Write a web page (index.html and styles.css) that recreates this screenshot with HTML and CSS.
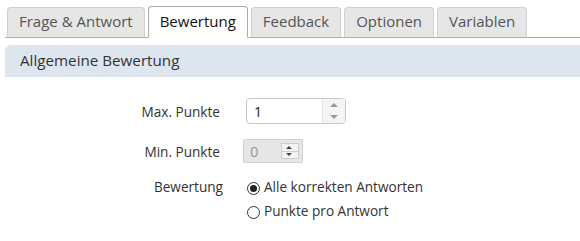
FILE: index.html
```html
<!DOCTYPE HTML>
<html>
<head>
<title>Bewertung</title>
<link rel="stylesheet" href="styles.css">
</head>
<body>

<!-- Tabs -->
<div class="tabs">
	<div class="tab">Frage &amp; Antwort</div>
	<div class="tab active">Bewertung</div>
	<div class="tab">Feedback</div>
	<div class="tab">Optionen</div>
	<div class="tab">Variablen</div>
</div>

<!-- Section -->
<div class="section-head">Allgemeine Bewertung</div>

<div class="form">
	<div class="row">
		<label class="label">Max. Punkte</label>
		<div class="spin">
			<input type="text" value="1">
			<div class="spin-btns">
				<span class="up"></span>
				<span class="down"></span>
			</div>
		</div>
	</div>
	<div class="row">
		<label class="label">Min. Punkte</label>
		<div class="spin small disabled">
			<input type="text" value="0" disabled>
			<div class="spin-btns">
				<span class="up"></span>
				<span class="down"></span>
			</div>
		</div>
	</div>
	<div class="row top">
		<label class="label">Bewertung</label>
		<div class="radios">
			<label class="radio"><span class="dot checked"></span>Alle korrekten Antworten</label>
			<label class="radio"><span class="dot"></span>Punkte pro Antwort</label>
		</div>
	</div>
</div>

</body>
</html>
```

FILE: styles.css
```css
body {
	margin: 0;
	padding: 0 0 0 5px;
	background: #fff;
	font-family: "Open Sans", "Noto Sans", sans-serif;
	color: #333;
}
.tabs {
	display: flex;
	gap: 3px;
	padding: 7px 0 0 2px;
	border-bottom: 1px solid #aaa;
	height: 30px;
	box-sizing: content-box;
}
.tab {
	box-sizing: border-box;
	height: 31px;
	margin-bottom: -1px;
	padding: 0 11px;
	line-height: 27px;
	font-size: 15px;
	color: #555;
	background: #e6e6e6;
	border: 1px solid #d0d0d0;
	border-bottom: 1px solid #aaa;
	border-radius: 4px 4px 0 0;
}
.tab.active {
	background: #fff;
	color: #111;
	height: 32px;
	margin-top: -1px;
	border-color: #aaa;
	border-bottom-color: #fff;
	padding: 1px 11px 0;
}
.section-head {
	margin-top: 7px;
	height: 32px;
	line-height: 31px;
	padding-left: 15px;
	background: #dde6ef;
	border-radius: 6px 0 0 0;
	font-size: 15.2px;
	color: #333;
}
.form {
	padding-top: 21px;
	display: flex;
	flex-direction: column;
	gap: 15px;
}
.row {
	display: flex;
	align-items: center;
	gap: 26px;
}
.row.top {
	align-items: flex-start;
	gap: 21px;
	margin-top: -1px;
}
.label {
	width: 215px;
	text-align: right;
	font-size: 13.6px;
	color: #333;
}
.row.top .label {
	width: 218px;
	line-height: 20px;
}
.spin {
	display: flex;
	width: 100px;
	height: 26px;
	box-sizing: border-box;
	border: 1px solid #c8c8c8;
	border-radius: 4px;
	background: #fff;
	overflow: hidden;
}
.spin input {
	flex: 1;
	min-width: 0;
	border: 0;
	outline: none;
	padding: 0 0 0 7px;
	font-family: "Open Sans", "Noto Sans", sans-serif;
	font-size: 14px;
	color: #222;
	background: transparent;
}
.spin-btns {
	width: 22px;
	display: flex;
	flex-direction: column;
	background: #f4f4f4;
	border-left: 1px solid #e2e2e2;
}
.spin-btns span {
	flex: 1;
	position: relative;
}
.spin-btns span::after {
	content: "";
	position: absolute;
	left: 7px;
	width: 0;
	height: 0;
	border-left: 4px solid transparent;
	border-right: 4px solid transparent;
}
.spin-btns .up::after {
	top: 4px;
	border-bottom: 4px solid #999;
}
.spin-btns .down::after {
	bottom: 4px;
	border-top: 4px solid #999;
}
.spin.small {
	width: 60px;
	height: 24px;
	margin-left: -3px;
	border-color: #d0d0d0;
	border-radius: 2px;
	background: #e6e6e6;
}
.spin.small input {
	color: #999;
	padding-left: 6px;
	font-size: 15px;
}
.spin.small .spin-btns {
	width: 16px;
	margin: 3px 3px 3px 0;
	background: #f2f2f2;
	border: 1px solid #ccc;
}
.spin.small .spin-btns span::after {
	left: 4px;
	border-left-width: 3px;
	border-right-width: 3px;
}
.spin.small .spin-btns .up {
	border-bottom: 1px solid #ccc;
}
.spin.small .spin-btns .up::after {
	top: 2px;
	border-bottom-width: 3px;
	border-bottom-color: #444;
}
.spin.small .spin-btns .down::after {
	bottom: 2px;
	border-top-width: 3px;
	border-top-color: #444;
}
.radios {
	display: flex;
	flex-direction: column;
	gap: 4px;
	margin-left: 3px;
}
.radio {
	display: flex;
	align-items: center;
	gap: 4px;
	font-size: 13.6px;
	line-height: 20px;
	color: #333;
}
.dot {
	box-sizing: border-box;
	width: 13px;
	height: 13px;
	border: 1px solid #333;
	border-radius: 50%;
	position: relative;
	margin-top: 2px;
}
.dot.checked::after {
	content: "";
	position: absolute;
	left: 2px;
	top: 2px;
	width: 7px;
	height: 7px;
	border-radius: 50%;
	background: #222;
}
```
